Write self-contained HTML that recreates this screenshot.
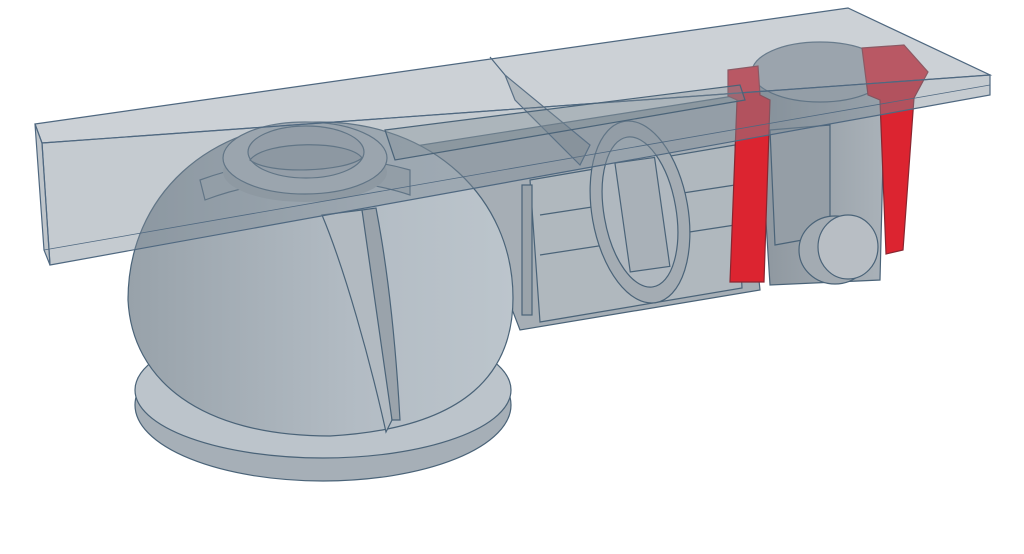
<!DOCTYPE html><html><head><style>html,body{margin:0;padding:0;background:#fff;width:1024px;height:554px;overflow:hidden}</style></head><body>
<svg width="1024" height="554" viewBox="0 0 1024 554" xmlns="http://www.w3.org/2000/svg" stroke="#4a6378" stroke-width="1.2">
<defs>
<linearGradient id="dg" x1="0" y1="0" x2="1" y2="0"><stop offset="0" stop-color="#98a2aa"/><stop offset="0.6" stop-color="#b3bcc4"/><stop offset="1" stop-color="#bcc5cc"/></linearGradient>
<linearGradient id="cg" x1="0" y1="0" x2="1" y2="0"><stop offset="0" stop-color="#8d969e"/><stop offset="1" stop-color="#aab2b9"/></linearGradient>
</defs>
<polygon points="390,150 740,95 760,290 520,330 470,200" fill="#a6aeb5"/>
<polygon points="530,180 735,145 742,288 540,322" fill="#b0b8be"/>
<polyline points="540,215 735,185" fill="none"/>
<polyline points="540,255 735,225" fill="none"/>
<ellipse cx="640" cy="212" rx="48" ry="92" fill="#a4acb3" transform="rotate(-10 640 212)"/>
<ellipse cx="640" cy="212" rx="36" ry="76" fill="#b0b8bf" transform="rotate(-10 640 212)"/>
<rect x="622" y="160" width="40" height="110" fill="#a9b1b8" transform="rotate(-8 640 212)"/>
<rect x="522" y="185" width="10" height="130" fill="#9aa3aa"/>
<polygon points="757,80 885,80 880,280 770,285" fill="url(#cg)"/>
<path d="M770,130 L830,125 L830,235 L775,245 Z" fill="#959ea6"/>
<ellipse cx="820" cy="72" rx="68" ry="30" fill="#a7aeb5"/>
<ellipse cx="835" cy="250" rx="36" ry="34" fill="#a3abb2"/>
<ellipse cx="848" cy="247" rx="30" ry="32" fill="#b8bec4"/>
<polygon points="728,70 758,66 760,95 770,100 764,282 730,282 737,100 728,96" fill="#dc2430" stroke="#8a2630"/>
<polygon points="862,48 904,45 928,72 914,98 903,250 886,254 880,100 868,95" fill="#dc2430" stroke="#8a2630"/>
<ellipse cx="323" cy="405" rx="188" ry="76" fill="#a6afb7"/>
<ellipse cx="323" cy="390" rx="188" ry="68" fill="#bcc4cb"/>
<path d="M128,300 C128,195 210,122 320,122 C432,122 513,198 513,298 C513,370 470,428 330,436 C200,436 132,380 128,300 Z" fill="url(#dg)"/>
<path d="M322,215 L362,210 C372,260 385,330 392,420 L386,432 C370,360 345,270 322,215 Z" fill="#b2bac1"/>
<path d="M362,210 L376,208 C386,260 395,330 400,420 L392,420 Z" fill="#9aa3ab"/>
<path d="M205,200 C270,175 350,175 410,195 L410,170 C340,150 260,158 200,180 Z" fill="#a4adb5"/>
<ellipse cx="305" cy="172" rx="82" ry="30" fill="#9ba4ac" stroke="none"/>
<ellipse cx="305" cy="158" rx="82" ry="36" fill="#b3bbc2"/>
<ellipse cx="306" cy="152" rx="58" ry="26" fill="#a6aeb6"/>
<path d="M250,160 C265,140 350,140 362,158 C345,172 268,175 250,160 Z" fill="#9aa3ab"/>
<polygon points="35,124 848,8 990,75 42,143" fill="#8e99a3" fill-opacity="0.45" stroke="#4f6880"/>
<polygon points="42,143 990,75 990,95 50,265" fill="#7f8b96" fill-opacity="0.45" stroke="#4f6880"/>
<polygon points="35,124 42,143 50,265 44,250" fill="#7f8b96" fill-opacity="0.5" stroke="#4f6880"/>
<line x1="44" y1="250" x2="990" y2="85" stroke="#4f6880" stroke-width="0.8"/>
<line x1="490" y1="57" x2="505" y2="75" stroke="#4f6880"/>
<polygon points="505,75 590,145 580,165 515,100" fill="#6e7a85" fill-opacity="0.3" stroke="#5b7186"/>
<polygon points="385,130 740,85 745,100 395,160" fill="#7f8b96" fill-opacity="0.35"/>
</svg>
</body></html>
